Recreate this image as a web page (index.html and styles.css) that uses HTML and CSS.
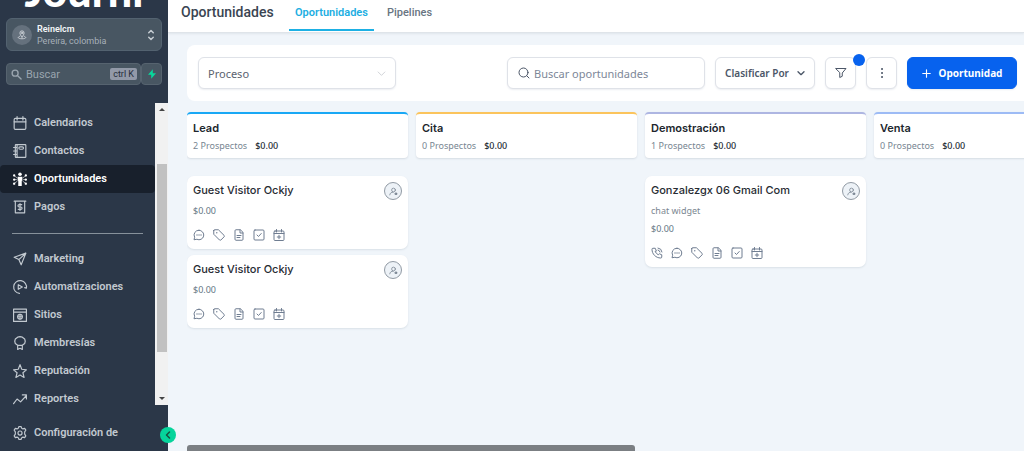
FILE: index.html
```html
<!DOCTYPE html>
<html lang="es">
<head>
<meta charset="utf-8">
<meta name="viewport" content="width=device-width, initial-scale=1">
<title>Oportunidades</title>
<link rel="stylesheet" href="styles.css">
</head>
<body>
<svg class="sprite" aria-hidden="true">
  <symbol id="chat" viewBox="0 0 24 24"><path d="M12 2.500a9.500 9.500 0 1 1-4.200 18L2 21.500l1.300-5A9.500 9.500 0 0 1 12 2.500z"/><path d="M8 12h.1M12 12h.1M16 12h.1" stroke-width="2.600"/></symbol>
  <symbol id="tag" viewBox="0 0 24 24"><path d="M1.500 3v7.500L13 22a2 2 0 0 0 2.800 0l6.400-6.400a2 2 0 0 0 0-2.800L10.800 1.500H3A1.500 1.500 0 0 0 1.500 3z"/><path d="M7.500 7.500h.1" stroke-width="2.600"/></symbol>
  <symbol id="doc" viewBox="0 0 24 24"><path d="M14 1.500H6a2 2 0 0 0-2 2v17a2 2 0 0 0 2 2h12a2 2 0 0 0 2-2v-13zM14 2v6h6M8 13h8M8 17h6"/></symbol>
  <symbol id="task" viewBox="0 0 24 24"><rect x="2" y="2" width="20" height="20" rx="2"/><path d="M8 12l3 3 5.500-6"/></symbol>
  <symbol id="cal-plus" viewBox="0 0 24 24"><rect x="2" y="4" width="20" height="19" rx="2"/><path d="M2 9h20M7 1v5M17 1v5M12 12.500v7M8.500 16h7"/></symbol>
  <symbol id="phone" viewBox="0 0 24 24"><path d="M14 6a5 5 0 0 1 4 4M14 2a9 9 0 0 1 8 8M8.500 9.500a14 14 0 0 0 6 6l2-2 5 2v4.500a2 2 0 0 1-2 2C9.500 22 2 14 2 4.500a2 2 0 0 1 2-2h4.500l2 5z"/></symbol>
  <symbol id="user" viewBox="0 0 24 24"><circle cx="12" cy="8" r="5"/><path d="M2 21c1-5 4-7.500 9-7"/><rect x="17" y="16" width="4" height="4" fill="currentColor"/></symbol>
  <symbol id="down" viewBox="0 0 24 24"><path d="M3 8l9 9 9-9"/></symbol>
</svg>

<div class="app">
  <aside class="sidebar">
    <div class="logo"><span>Journi</span></div>
    <button class="account" type="button">
      <span class="account-pin"><svg class="ic" viewBox="0 0 24 24"><circle cx="12" cy="7" r="2"/><path d="M12 17c-3-4-5-6.500-5-10a5 5 0 0 1 10 0c0 3.500-2 6-5 10zM7 15c-7 2-5 6 5 6s12-4 5-6"/></svg></span>
      <span class="account-text"><strong>Reinelcm</strong><span>Pereira, colombia</span></span>
      <svg class="ic updown" viewBox="0 0 8 14"><path d="M1 4l3-3 3 3M1 10l3 3 3-3"/></svg>
    </button>
    <div class="quick">
      <label class="quick-search">
        <svg class="ic" viewBox="0 0 24 24"><circle cx="9" cy="9" r="6.500"/><path d="M14 14l8 8"/></svg>
        <input type="text" placeholder="Buscar" aria-label="Buscar">
        <kbd>ctrl K</kbd>
      </label>
      <button class="bolt" type="button" aria-label="Acciones rápidas"><svg viewBox="0 0 10 12"><path d="M6 0L0 7h4v5l6-7H6z" fill="currentColor"/></svg></button>
    </div>
    <div class="nav-area">
      <nav class="nav">
        <a href="#"><svg class="ic" viewBox="0 0 24 24"><rect x="2" y="4" width="20" height="19" rx="2"/><path d="M2 10h20M7 1v6M17 1v6"/></svg>Calendarios</a>
        <a href="#"><svg class="ic" viewBox="0 0 24 24"><rect x="4" y="1" width="18" height="22" rx="1"/><rect x="10" y="5" width="8" height="4" rx="2"/><path d="M7 1v22M1 6h5M1 12h5M1 18h5"/></svg>Contactos</a>
        <a href="#" class="active" aria-current="page"><svg class="ic thin" viewBox="0 0 24 24"><g fill="currentColor" stroke="none"><circle cx="12" cy="4" r="3"/><circle cx="2" cy="6" r="2"/><circle cx="22" cy="6" r="2"/><circle cx="2" cy="13" r="2"/><circle cx="22" cy="13" r="2"/><circle cx="2" cy="20" r="2"/><circle cx="22" cy="20" r="2"/><path d="M8 8h8v7h-1v9H9v-9H8z"/></g><path d="M3 7l4 3M21 7l-4 3M3 13h3M21 13h-3M3 19l4-3M21 19l-4-3"/></svg>Oportunidades</a>
        <a href="#"><svg class="ic" viewBox="0 0 24 24"><path d="M2 2h20M4 2v20h16V2M15 8h-4.500a2 2 0 0 0 0 4h3a2 2 0 0 1 0 4H9M12 6v12"/></svg>Pagos</a>
        <hr>
        <a href="#"><svg class="ic" viewBox="0 0 24 24"><path d="M22 2L2 9l8 4 4 9zM22 2L10 13"/></svg>Marketing</a>
        <a href="#"><svg class="ic" viewBox="0 0 24 24"><path d="M23 14A11 11 0 1 0 11 23M23 14l-3-1M9 8v8l7-4z"/></svg>Automatizaciones</a>
        <a href="#"><svg class="ic" viewBox="0 0 24 24"><path d="M1 2h22v21H1zM1 7h22"/><circle cx="12" cy="15" r="4"/><path d="M8 15h8M12 11v8"/></svg>Sitios</a>
        <a href="#"><svg class="ic" viewBox="0 0 24 24"><path d="M12 1l4 1 4 3 1 4-1 4-4 3H8l-4-3-1-4 1-4 4-3zM8 16v7l4-2 4 2v-7"/></svg>Membresías</a>
        <a href="#"><svg class="ic" viewBox="0 0 24 24"><path d="M12 1l3 8 8 1-6 5 2 8-7-4-7 4 2-8-6-5 8-1z"/></svg>Reputación</a>
        <a href="#"><svg class="ic" viewBox="0 0 24 24"><path d="M1 20l6-8 6 5L23 6M16 5h7v7"/></svg>Reportes</a>
      </nav>
      <div class="track" aria-hidden="true"><i class="arrow up"></i><span class="thumb"></span><i class="arrow"></i></div>
    </div>
    <a class="settings" href="#"><svg class="ic" viewBox="0 0 24 24"><path d="M10 1h4l1 3 2 1 3-1 2 3-2 3v4l2 3-2 3-3-1-2 1-1 3h-4l-1-3-2-1-3 1-2-3 2-3v-4L2 7l2-3 3 1 2-1z"/><circle cx="12" cy="12" r="3.500"/></svg>Configuración de</a>
    <button class="collapse" type="button" aria-label="Contraer menú"><svg class="ic" viewBox="0 0 8 10"><path d="M6 1L2 5l4 4"/></svg></button>
  </aside>

  <div class="content">
    <header class="topbar">
      <h1>Oportunidades</h1>
      <nav class="tabs"><a class="current" href="#">Oportunidades</a><a href="#">Pipelines</a></nav>
    </header>
    <main class="main">
      <div class="toolbar">
        <div class="pipeline"><select aria-label="Pipeline"><option>Proceso</option></select><svg class="ic"><use href="#down"/></svg></div>
        <label class="search"><svg class="ic" viewBox="0 0 24 24"><circle cx="11" cy="11" r="9"/><path d="M17.500 17.500L22 22"/></svg><input type="text" placeholder="Buscar oportunidades" aria-label="Buscar oportunidades"></label>
        <button class="btn sort" type="button">Clasificar Por<svg class="ic"><use href="#down"/></svg></button>
        <button class="btn square" type="button" aria-label="Filtros"><svg class="ic" viewBox="0 0 24 24"><path d="M2 3h20l-7.500 9v6.500L9.500 21v-9z"/></svg><span class="badge"></span></button>
        <button class="btn square" type="button" aria-label="Más opciones"><svg class="ic dots" viewBox="0 0 24 24"><path d="M12 4h.1M12 12h.1M12 20h.1"/></svg></button>
        <button class="btn primary" type="button"><svg class="ic" viewBox="0 0 24 24"><path d="M12 2v20M2 12h20"/></svg>Oportunidad</button>
      </div>
      <div class="board">
        <section class="column">
          <header class="stage blue"><h2>Lead</h2><p>2 Prospectos<b>$0.00</b></p></header>
          <article class="card">
            <div class="card-top"><h3>Guest Visitor Ockjy</h3><button class="owner" type="button" aria-label="Asignar"><svg class="ic"><use href="#user"/></svg></button></div>
            <p>$0.00</p>
            <div class="actions"><svg class="ic"><use href="#chat"/></svg><svg class="ic"><use href="#tag"/></svg><svg class="ic"><use href="#doc"/></svg><svg class="ic"><use href="#task"/></svg><svg class="ic"><use href="#cal-plus"/></svg></div>
          </article>
          <article class="card">
            <div class="card-top"><h3>Guest Visitor Ockjy</h3><button class="owner" type="button" aria-label="Asignar"><svg class="ic"><use href="#user"/></svg></button></div>
            <p>$0.00</p>
            <div class="actions"><svg class="ic"><use href="#chat"/></svg><svg class="ic"><use href="#tag"/></svg><svg class="ic"><use href="#doc"/></svg><svg class="ic"><use href="#task"/></svg><svg class="ic"><use href="#cal-plus"/></svg></div>
          </article>
        </section>
        <section class="column">
          <header class="stage amber"><h2>Cita</h2><p>0 Prospectos<b>$0.00</b></p></header>
        </section>
        <section class="column">
          <header class="stage lilac"><h2>Demostración</h2><p>1 Prospectos<b>$0.00</b></p></header>
          <article class="card">
            <div class="card-top"><h3>Gonzalezgx 06 Gmail Com</h3><button class="owner" type="button" aria-label="Asignar"><svg class="ic"><use href="#user"/></svg></button></div>
            <p class="source">chat widget</p>
            <p>$0.00</p>
            <div class="actions"><svg class="ic"><use href="#phone"/></svg><svg class="ic"><use href="#chat"/></svg><svg class="ic"><use href="#tag"/></svg><svg class="ic"><use href="#doc"/></svg><svg class="ic"><use href="#task"/></svg><svg class="ic"><use href="#cal-plus"/></svg></div>
          </article>
        </section>
        <section class="column">
          <header class="stage sky"><h2>Venta</h2><p>0 Prospectos<b>$0.00</b></p></header>
        </section>
      </div>
      <div class="hscroll" aria-hidden="true"><span></span></div>
    </main>
  </div>
</div>
</body>
</html>
```
FILE: styles.css
```css
* { box-sizing: border-box; }
body { margin: 0; font-family: Roboto, "Liberation Sans", sans-serif; background: #f0f5fa; color: #2f3a45; }
h1, h2, h3, p { margin: 0; }
a { color: inherit; text-decoration: none; }
button, input, select { font: inherit; color: inherit; }
button { cursor: pointer; padding: 0; }
.sprite { display: none; }
.ic { width: 12px; height: 12px; flex: none; overflow: visible; fill: none; stroke: currentColor; stroke-width: 2; stroke-linecap: round; stroke-linejoin: round; }

.app { display: flex; height: 100vh; overflow: hidden; }

/* Sidebar */
.sidebar { position: relative; z-index: 1; flex: 0 0 168px; min-width: 0; display: flex; flex-direction: column; background: #2b3748; color: #c2c9d0; }
.logo { flex: none; display: flex; align-items: flex-end; justify-content: center; height: 18px; padding-bottom: 11px; overflow: hidden; }
.logo span { font: 900 43px/32px Lato, sans-serif; color: #fff; }
.account { display: flex; align-items: center; gap: 5px; height: 33px; margin: 0 6px; padding: 0 7px 0 5px; border: 1px solid #536270; border-radius: 6px; background: #485662; text-align: left; }
.account-pin { display: grid; place-items: center; width: 20px; height: 20px; border-radius: 50%; background: #65717d; color: #d5dade; }
.account-pin .ic { width: 10px; height: 10px; }
.account-text { flex: 1; min-width: 0; display: flex; flex-direction: column; font-size: 9px; line-height: 12px; color: #a7b0b9; }
.account-text strong { font-weight: 600; color: #f4f6f8; }
.account .updown { width: 6px; height: 12px; stroke-width: 2; color: #c5ccd2; }
.quick { display: flex; height: 22px; margin: 12px 6px 0; }
.quick-search, .bolt { border: 1px solid #56636f; border-radius: 4px; background: #485662; }
.quick-search { flex: 1; min-width: 0; display: flex; align-items: center; gap: 4px; padding: 0 3px 0 4px; color: #9aa5af; }
.quick-search .ic { width: 11px; height: 11px; stroke-width: 3; }
.quick-search input { flex: 1; width: 0; min-width: 0; padding: 0; border: 0; outline: 0; background: none; font-size: 11px; }
.quick-search input::placeholder { color: #9aa5af; opacity: 1; }
kbd { flex: none; padding: 0 3px; border-radius: 2px; background: #9299a8; color: #252e3b; font: 9px/12px Roboto, sans-serif; }
.bolt { display: grid; place-items: center; flex: none; width: 21px; color: #08d89c; }
.bolt svg { width: 8px; height: 10px; }
.nav-area { flex: 1; min-height: 0; display: flex; margin-top: 18px; overflow: hidden; }
.nav { flex: 1; min-width: 0; padding-top: 6px; overflow: hidden; }
.nav a, .settings { display: flex; align-items: center; gap: 7px; height: 28px; padding-left: 13px; font-size: 11px; line-height: 12px; font-weight: 600; white-space: nowrap; }
.nav .ic, .settings .ic { width: 14px; height: 14px; stroke-width: 2; }
.nav .active { border-radius: 4px; background: #18202c; color: #fff; }
.nav .thin { stroke-width: 1; }
.nav hr { height: 1px; margin: 12px 12px 11px; border: 0; background: #87919b; }
.track { flex: none; display: flex; flex-direction: column; align-items: center; width: 13px; padding: 5px 0; background: #f1f1f1; }
.thumb { flex: 0 0 188px; width: 10px; margin: 53px 0 auto; background: #c1c1c1; }
.arrow { border: 3px solid transparent; border-top-color: #444; border-bottom: 0; }
.arrow.up { border-top: 0; border-bottom: 3px solid #444; }
.settings { flex: none; height: 28px; margin: 14px 0 4px; }
.collapse { position: absolute; right: -8px; bottom: 8px; display: grid; place-items: center; width: 16px; height: 16px; border: 0; border-radius: 50%; background: #06d49b; color: #17523f; }
.collapse .ic { width: 6px; height: 8px; }

/* Header */
.content { flex: 1; min-width: 0; display: flex; flex-direction: column; }
.topbar { flex: none; display: flex; height: 33px; padding-left: 13px; background: #fff; border-bottom: 1px solid #dfe4e9; box-shadow: 0 1px 2px #dfe5eb; }
.topbar h1 { width: 108px; font-size: 14px; font-weight: 500; line-height: 24px; color: #3a4552; }
.tabs { display: flex; gap: 7px; height: 31px; font-size: 11px; font-weight: 500; line-height: 26px; color: #687582; }
.tabs a { padding: 0 6px; }
.tabs .current { border-bottom: 2px solid #1db0e4; font-weight: 600; color: #1caee2; }

/* Toolbar */
.main { flex: 1; min-height: 0; display: flex; flex-direction: column; padding: 12px 0 0 19px; }
.toolbar { flex: none; display: flex; align-items: center; gap: 10px; height: 56px; padding: 0 7px 0 11px; border-radius: 8px 0 0 8px; background: #fff; font-family: "Noto Sans", sans-serif; font-size: 11px; color: #4b5667; }
.pipeline, .search, .btn { height: 32px; border: 1px solid #dfe2e8; border-radius: 6px; background: #fff; box-shadow: 0 1px 2px #eceef2; }
.pipeline { display: flex; align-items: center; width: 198px; margin-right: auto; padding-right: 9px; color: #5b6370; }
.pipeline select { flex: 1; height: 100%; padding: 0 9px; border: 0; background: none; appearance: none; outline: 0; }
.pipeline .ic { width: 9px; height: 9px; color: #c3c6cc; }
.search { display: flex; align-items: center; gap: 4px; width: 198px; padding: 0 10px; }
.search input { flex: 1; min-width: 0; padding: 0; border: 0; outline: 0; background: none; }
.search input::placeholder { color: #7d8798; opacity: 1; }
.btn { position: relative; display: flex; align-items: center; justify-content: center; }
.sort { gap: 8px; width: 100px; font-size: 10px; font-weight: 600; white-space: nowrap; }
.sort .ic { width: 8px; height: 8px; stroke-width: 4; }
.square { width: 31px; }
.dots { stroke-width: 4; }
.badge { position: absolute; top: -4px; right: -10px; width: 12px; height: 12px; border-radius: 50%; background: #0762ee; }
.primary { gap: 8px; width: 110px; border-color: #0762ee; background: #0762ee; color: #fff; font-size: 10px; font-weight: 700; }
.primary .ic { width: 9px; height: 9px; stroke-width: 3; }

/* Board */
.board { flex: 1; min-height: 0; display: flex; gap: 8px; padding-top: 11px; overflow: hidden; }
.column { flex: 0 0 221px; display: flex; flex-direction: column; gap: 6px; }
.stage { flex: none; height: 46px; margin-bottom: 12px; padding: 6px 6px 0; border-top: 2px solid; border-radius: 4px; background: #fff; box-shadow: 0 1px 2px #d5dce3; }
.blue { border-color: #19a8f5; }
.amber { border-color: #fbc45c; }
.lilac { border-color: #aeb6e2; }
.sky { border-color: #9dbbf5; }
.stage h2 { font: 600 11px/16px Inter, sans-serif; color: #20262d; }
.stage p { display: flex; gap: 8px; margin-top: 2px; font: 9px/16px "Noto Sans", sans-serif; color: #788692; }
.stage b { font-weight: 500; color: #252c34; }
.card { flex: none; padding: 6px 6px 8px; border-radius: 7px; background: #fff; box-shadow: 0 1px 2px #d9e0e7; }
.card-top { display: flex; justify-content: space-between; height: 20px; }
.card h3 { font: 500 11px/16px Inter, sans-serif; color: #272c33; }
.owner { display: grid; place-items: center; width: 18px; height: 18px; border: 1px solid #919aa4; border-radius: 50%; background: #edf2f7; color: #75818f; }
.owner .ic { width: 9px; height: 9px; }
.card p { font: 9px/18px "Noto Sans", sans-serif; color: #657885; }
.card .source { color: #7b8791; }
.actions { display: flex; gap: 8px; margin-top: 9px; color: #6f7d91; }
.hscroll { flex: 0 0 6px; }
.hscroll span { display: block; width: 448px; height: 6px; border-radius: 3px 3px 0 0; background: #7b7f83; }
```
